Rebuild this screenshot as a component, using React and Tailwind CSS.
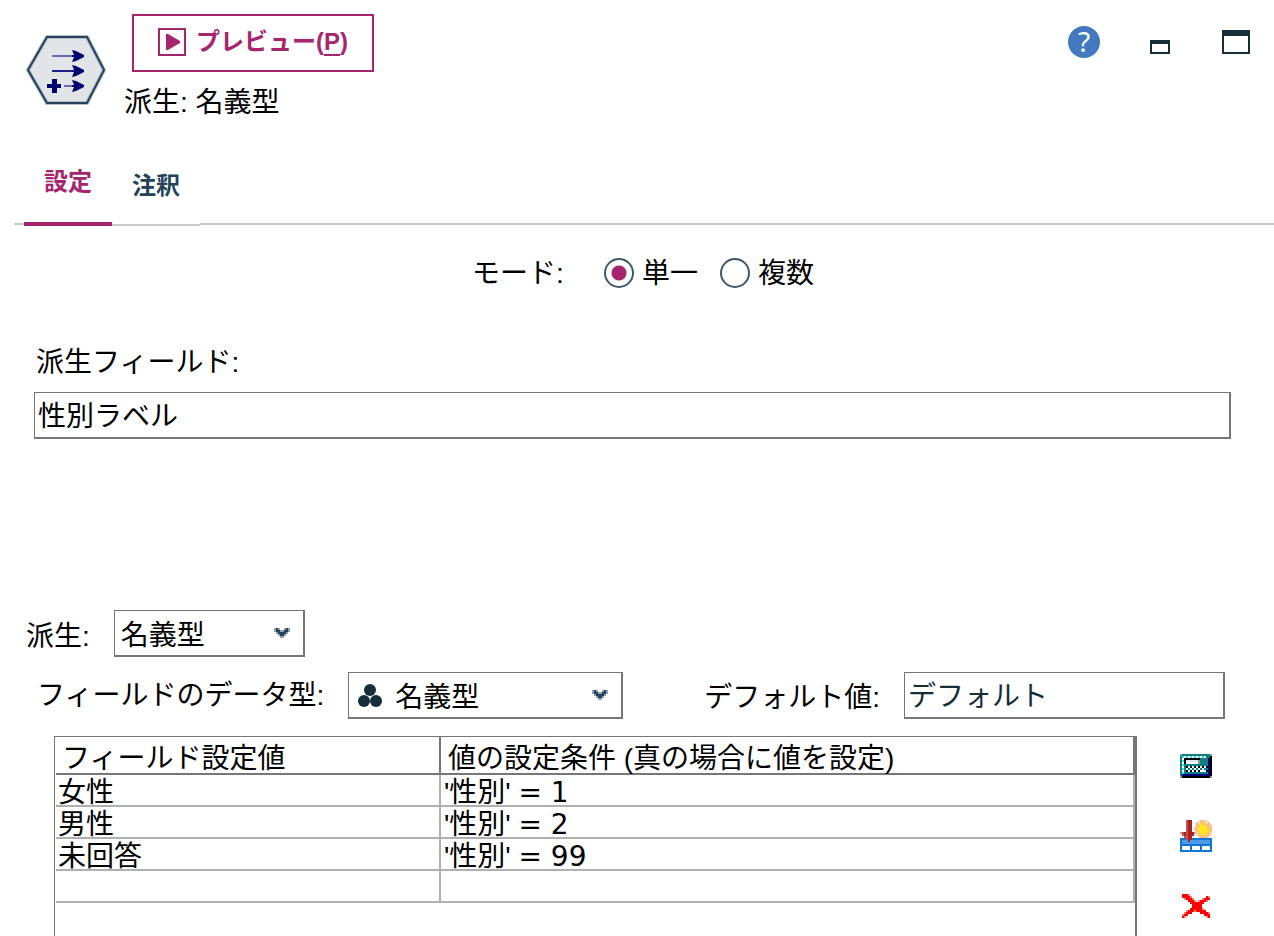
import { useState } from 'react';

const conditions = [
  { value: '女性', field: "'性別'", test: '= 1' },
  { value: '男性', field: "'性別'", test: '= 2' },
  { value: '未回答', field: "'性別'", test: '= 99' },
  { value: '', field: '', test: '' },
];

const colors = {
  k: '#000000',
  n: '#000080',
  t: '#008080',
  d: '#2a7a80',
  c: '#40e0e0',
  w: '#ffffff',
  e: '#e4e4ea',
  g: '#8a9a9a',
  r: '#a82424',
  R: '#c65050',
  s: '#d99c9c',
  b: '#0f74d4',
  B: '#4a9be8',
  o: '#f7c08a',
  O: '#fbdcbc',
  y: '#ffe81a',
  Y: '#ffd050',
  x: '#ff0000',
  X: '#ff8080',
  m: '#24435a',
  M: '#8fa2b0',
};

const calculator = [
  'gtdtdtdtdtdtdtdg',
  'tcwcwcwcwcwcwttk',
  'dwkkkkkkkktdtdnk',
  'tckeeeeeegtdtdnk',
  'dwkwwwwwwgdtdtnk',
  'tctttttttttttdnk',
  'dwtkwkwkwkwkwknk',
  'tctwtwtwtwtwttnk',
  'dwtkwkwkwkwwwknk',
  'tcttttttttttttnk',
  'dnnnnnnnnnnnnnnk',
  'gkkkkkkkkkkkkkkg',
];

const insertRow = [
  '...Rrr...OooOO..',
  '...Rrr..oOYYoOo.',
  '...Rrr..oYyYYooO',
  '...Rrr.OoYyyyYoo',
  '...Rrr.ooyyyyYYo',
  '...Rrr.OoYyyyyYo',
  'sRrRrrrsOYyyyYoO',
  '.RrRrrr.OoYYYooO',
  '..RRrr...OooooO.',
  'bbbRrrbbbbbbbbbb',
  'bBBBrBBBBBBBBBBb',
  'bBBBBBBBBBBBBBBb',
  'bbbbbbbbbbbbbbbb',
  'bwwwwbwwwwbwwwwb',
  'bwwwwbwwwwbwwwwb',
  'bbbbbbbbbbbbbbbb',
];

const cross = [
  '.xxxX...........',
  '.xxxxX.......xX.',
  '..XxxxX....Xxxx.',
  '....xxxX.XxxxX..',
  '.....xxxxxxx....',
  '......xxxxx.....',
  '......xxxxx.....',
  '.....xxxxxxX....',
  '...XxxxXxxxxx...',
  '..Xxxx....xxxxX.',
  '.Xxx........xxx.',
  '.xX..........Xx.',
];

const chevron = ['MmM..MmM', 'MmmMMmmM', '.MmmmmM.', '..MmmM..', '...MM...'];

function PixelIcon({ rows }) {
  const width = rows[0].length;
  return (
    <svg
      width={width * 2}
      height={rows.length * 2}
      viewBox={`0 0 ${width} ${rows.length}`}
      shapeRendering="crispEdges"
      aria-hidden="true"
    >
      {rows.map((row, y) =>
        row.split('').map((c, x) =>
          c === '.' ? null : <rect key={`${x}-${y}`} x={x} y={y} width="1" height="1" fill={colors[c]} />
        )
      )}
    </svg>
  );
}

function NodeIcon() {
  return (
    <svg width="80" height="72" viewBox="0 0 80 72" className="shrink-0" aria-hidden="true">
      <path d="M21 3H61L78 36L61 69H21L2 36Z" fill="#e1e5e8" stroke="#b4bec5" strokeWidth="4" />
      <path d="M21 3H61L78 36L61 69H21L2 36Z" fill="none" stroke="#24435a" strokeWidth="2" />
      <path d="M26 22H48" stroke="#6a6ab0" strokeWidth="2" />
      <path d="M26 37H48" stroke="#20208a" strokeWidth="2" />
      <path d="M38 52H48" stroke="#6a6ab0" strokeWidth="2" />
      <g fill="#000070">
        <path d="M46 16L50 17L58 21V23L50 27L46 28L48 23H46V21H48Z" />
        <path d="M46 31L50 32L58 36V38L50 42L46 43L48 38H46V36H48Z" />
        <path d="M46 46L50 47L58 51V53L50 57L46 58L48 53H46V51H48Z" />
        <path d="M26 45H31V50H35V54H31V59H26V54H21V50H26Z" />
      </g>
    </svg>
  );
}

function NominalIcon() {
  return (
    <svg width="26" height="24" viewBox="0 0 26 24" aria-hidden="true">
      <g fill="#162d3a">
        <circle cx="13" cy="6" r="6" />
        <circle cx="7" cy="17" r="6" />
        <circle cx="19" cy="17" r="6" />
      </g>
    </svg>
  );
}

const boxClass = 'h-[47px] rounded-none border-t border-l border-r-2 border-b-2 border-[#777777] bg-white';

function Select({ id, className, selectClassName, icon }) {
  return (
    <div className={`relative ${className}`}>
      <select id={id} className={`${boxClass} w-full appearance-none pt-[6px] ${selectClassName}`}>
        <option>名義型</option>
      </select>
      {icon && <span className="pointer-events-none absolute top-3 left-[9px]">{icon}</span>}
      <span className="pointer-events-none absolute top-[18px] right-[15px]">
        <PixelIcon rows={chevron} />
      </span>
    </div>
  );
}

function Radio({ label, checked, onChange }) {
  return (
    <label className="flex items-center gap-2">
      <input
        type="radio"
        name="mode"
        checked={checked}
        onChange={onChange}
        className="size-[30px] appearance-none rounded-full border-2 border-[#3f586b] bg-white checked:bg-radial checked:from-[#a6266e] checked:from-[7px] checked:to-white checked:to-[8px]"
      />
      <span className="pt-[2px]">{label}</span>
    </label>
  );
}

export default function App() {
  const [mode, setMode] = useState('single');
  const [fieldName, setFieldName] = useState('性別ラベル');
  const [defaultValue, setDefaultValue] = useState('デフォルト');

  return (
    <div className="flex min-h-screen flex-col bg-white font-['Liberation_Sans','Noto_Sans_CJK_JP',sans-serif] text-[28px] leading-8 text-black">
      <header className="flex items-start pt-[14px] pr-6 pl-[26px]">
        <div className="pt-5">
          <NodeIcon />
        </div>
        <div className="ml-[18px]">
          <button
            type="button"
            className="ml-2 flex h-[58px] items-center gap-[10px] border-2 border-[#a6266e] px-6 pb-[2px] text-[24px] font-bold text-[#a6266e]"
          >
            <svg width="28" height="28" viewBox="0 0 28 28" aria-hidden="true">
              <rect x="1" y="1" width="26" height="26" fill="none" stroke="#a6266e" strokeWidth="2" />
              <path d="M8 6H10L22 13V15L10 22H8Z" fill="#a6266e" />
            </svg>
            <span>
              プレビュー(<span className="underline underline-offset-4">P</span>)
            </span>
          </button>
          <h1 className="mt-[15px]">派生: 名義型</h1>
        </div>
        <div className="ml-auto flex items-center pt-3">
          <button
            type="button"
            aria-label="ヘルプ"
            className="flex size-8 items-center justify-center rounded-full bg-[#4279bf] pb-[2px] font-['Noto_Sans',sans-serif] text-[28px] text-white"
          >
            ?
          </button>
          <button type="button" aria-label="最小化" className="mt-[10px] ml-[50px]">
            <svg width="20" height="14" viewBox="0 0 20 14" aria-hidden="true">
              <path d="M0 0H20V14H0ZM2 4V12H18V4Z" fill="#162d3a" fillRule="evenodd" />
            </svg>
          </button>
          <button type="button" aria-label="最大化" className="ml-[52px]">
            <svg width="28" height="24" viewBox="0 0 28 24" aria-hidden="true">
              <path d="M0 0H28V24H0ZM2 6V22H26V6Z" fill="#162d3a" fillRule="evenodd" />
            </svg>
          </button>
        </div>
      </header>

      <nav className="mt-[31px] ml-[14px] flex h-[76px] items-stretch text-[24px] font-bold">
        <div className="mb-px w-[10px] border-b-2 border-[#cacaca]" />
        <button type="button" className="border-b-4 border-[#a6266e] px-5 pb-2 text-[#a6266e]">
          設定
        </button>
        <button type="button" className="border-b-2 border-[#cacaca] px-5 pb-[2px] text-[#24435a]">
          注釈
        </button>
        <div className="mb-px flex-1 border-b-2 border-[#cacaca]" />
      </nav>

      <fieldset className="mt-[30px] mr-[2px] ml-[14px] flex items-center justify-center">
        <span className="mr-10 pt-[2px]">モード:</span>
        <div className="flex gap-[22px]">
          <Radio label="単一" checked={mode === 'single'} onChange={() => setMode('single')} />
          <Radio label="複数" checked={mode === 'multiple'} onChange={() => setMode('multiple')} />
        </div>
      </fieldset>

      <div className="mt-[57px] mr-[43px] ml-[34px] flex flex-col">
        <label htmlFor="field-name" className="pl-[2px]">
          派生フィールド:
        </label>
        <input
          id="field-name"
          type="text"
          value={fieldName}
          onChange={(e) => setFieldName(e.target.value)}
          className={`${boxClass} mt-[13px] w-full px-[3px] pb-[2px]`}
        />
      </div>

      <div className="mt-[171px] ml-[26px] flex items-center gap-6">
        <label htmlFor="derive-as" className="pt-[6px]">
          派生:
        </label>
        <Select id="derive-as" className="w-[191px]" selectClassName="pl-[6px]" />
      </div>

      <div className="mt-[15px] mr-[49px] ml-[37px] flex items-center">
        <label htmlFor="data-type">フィールドのデータ型:</label>
        <Select
          id="data-type"
          className="ml-6 w-[275px]"
          selectClassName="pl-[46px]"
          icon={<NominalIcon />}
        />
        <label htmlFor="default-value" className="ml-auto pt-1">
          デフォルト値:
        </label>
        <input
          id="default-value"
          type="text"
          value={defaultValue}
          onChange={(e) => setDefaultValue(e.target.value)}
          className={`${boxClass} ml-6 w-[321px] px-[3px] pb-[2px] text-[#162d3a]`}
        />
      </div>

      <div className="mt-[17px] mr-[62px] ml-[54px] flex flex-1 gap-[43px]">
        <div className="flex-1 border-t border-r-2 border-l border-[#777777] pl-px">
          <table className="w-full table-fixed border-separate border-spacing-0 text-left">
            <thead>
              <tr className="h-[38px] leading-[28px]">
                <th className="w-[385px] border-r-2 border-b-2 border-[#777777] pt-2 pl-[6px] font-normal">
                  フィールド設定値
                </th>
                <th className="border-r-2 border-b-2 border-[#777777] pt-2 pl-[7px] font-normal">
                  値の設定条件 (真の場合に値を設定)
                </th>
              </tr>
            </thead>
            <tbody>
              {conditions.map((row, i) => (
                <tr key={i} className="h-8 leading-[24px]">
                  <td className="border-r-2 border-b-2 border-[#b0b0b0] pt-[5px] pl-[2px]">{row.value}</td>
                  <td className="border-r-2 border-b-2 border-[#b0b0b0] pt-[5px] pl-[3px]">
                    {row.field} <span className="font-['DejaVu_Sans',sans-serif]">{row.test}</span>
                  </td>
                </tr>
              ))}
            </tbody>
          </table>
        </div>
        <div className="flex w-8 flex-col items-center pt-[18px]">
          <button type="button" aria-label="式ビルダー">
            <PixelIcon rows={calculator} />
          </button>
          <button type="button" aria-label="行を挿入" className="mt-[42px]">
            <PixelIcon rows={insertRow} />
          </button>
          <button type="button" aria-label="行を削除" className="mt-[42px]">
            <PixelIcon rows={cross} />
          </button>
        </div>
      </div>
    </div>
  );
}
